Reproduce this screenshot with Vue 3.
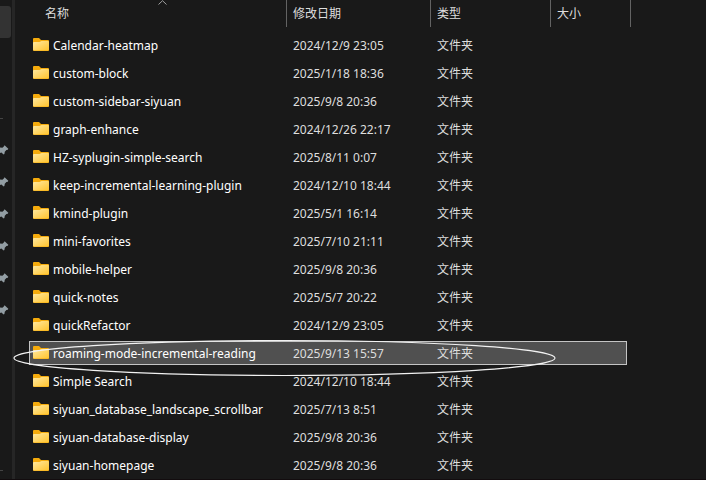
<template>
  <div class="explorer">
    <nav class="sidebar" aria-label="导航">
      <button class="nav-item active" type="button" aria-label="主文件夹"></button>
      <hr class="nav-line" />
      <div class="pins">
        <button v-for="n in 6" :key="n" class="pin" type="button" aria-label="已固定">
          <svg width="9" height="10" viewBox="0 0 9 10">
            <path d="M4.6 0.2 L8.3 3.8 L7.8 4.8 L6.4 5.1 L4.8 6.7 L4.4 9 L3.6 9.6 L1.4 7.4 L0 8 V2.6 L2.4 2.7 L3.8 1.5 Z" fill="#929da3" />
          </svg>
        </button>
      </div>
      <hr class="nav-line last" />
    </nav>
    <main class="content">
      <table class="files">
        <colgroup>
          <col class="col-name" />
          <col class="col-date" />
          <col class="col-type" />
          <col class="col-size" />
        </colgroup>
        <thead>
          <tr>
            <th v-for="col in columns" :key="col.key" scope="col">
              <button class="sort" :class="{ first: col.key === 'name' }" type="button" @click="sortBy(col.key)">
                <svg v-if="sortKey === col.key" class="caret" width="9" height="5" viewBox="0 0 9 5">
                  <path d="M0.5 4.5 L4.5 0.7 L8.5 4.5" fill="none" stroke="#a0a0a0" />
                </svg>
                {{ col.label }}
              </button>
            </th>
          </tr>
        </thead>
        <tbody>
          <tr
            v-for="file in files"
            :key="file.name"
            :class="{ selected: file.name === selected }"
            @click="selected = file.name"
          >
            <td>
              <div class="cell name">
                <svg class="folder" width="16" height="16" viewBox="0 0 16 16">
                  <defs>
                    <linearGradient id="folderFill" x1="0" y1="0" x2="1" y2="1">
                      <stop offset="0" stop-color="#ffe9a2" />
                      <stop offset="1" stop-color="#ffc42e" />
                    </linearGradient>
                  </defs>
                  <path d="M0 1 Q0 0 1 0 H6 L8 2 H15 Q16 2 16 3 V12 Q16 13 15 13 H1 Q0 13 0 12 Z" fill="#f5ab0c" />
                  <path d="M0 5 Q0 4 1 4 H6.5 L8.5 3 H15 Q16 3 16 4 V11.4 Q16 12.4 15 12.4 H1 Q0 12.4 0 11.4 Z" fill="url(#folderFill)" />
                </svg>
                <span>{{ file.name }}</span>
                <svg v-if="file.name === marked" class="mark" width="543" height="38" viewBox="0 0 543 38">
                  <ellipse cx="271.5" cy="19" rx="270.5" ry="17.5" fill="none" stroke="#f2f2f2" stroke-width="1.2" />
                </svg>
              </div>
            </td>
            <td><div class="cell">{{ file.date }}</div></td>
            <td><div class="cell">文件夹</div></td>
            <td><div class="cell end"></div></td>
          </tr>
        </tbody>
      </table>
    </main>
  </div>
</template>

<script setup>
import { ref } from "vue";

const columns = [
  { key: "name", label: "名称" },
  { key: "date", label: "修改日期" },
  { key: "type", label: "类型" },
  { key: "size", label: "大小" },
];

const files = ref([
  { name: "Calendar-heatmap", date: "2024/12/9 23:05" },
  { name: "custom-block", date: "2025/1/18 18:36" },
  { name: "custom-sidebar-siyuan", date: "2025/9/8 20:36" },
  { name: "graph-enhance", date: "2024/12/26 22:17" },
  { name: "HZ-syplugin-simple-search", date: "2025/8/11 0:07" },
  { name: "keep-incremental-learning-plugin", date: "2024/12/10 18:44" },
  { name: "kmind-plugin", date: "2025/5/1 16:14" },
  { name: "mini-favorites", date: "2025/7/10 21:11" },
  { name: "mobile-helper", date: "2025/9/8 20:36" },
  { name: "quick-notes", date: "2025/5/7 20:22" },
  { name: "quickRefactor", date: "2024/12/9 23:05" },
  { name: "roaming-mode-incremental-reading", date: "2025/9/13 15:57" },
  { name: "Simple Search", date: "2024/12/10 18:44" },
  { name: "siyuan_database_landscape_scrollbar", date: "2025/7/13 8:51" },
  { name: "siyuan-database-display", date: "2025/9/8 20:36" },
  { name: "siyuan-homepage", date: "2025/9/8 20:36" },
]);

const marked = "roaming-mode-incremental-reading";
const selected = ref(marked);
const sortKey = ref("name");

const sortBy = (key) => {
  sortKey.value = key;
};
</script>

<style>
body {
  margin: 0;
  background: #191919;
}
</style>

<style scoped>
.explorer {
  display: flex;
  min-height: 100vh;
  box-sizing: border-box;
  overflow: hidden;
  background: #191919;
  border-bottom: 1px solid #120c0e;
  color: #dedede;
  font-family: "Noto Sans", "Noto Sans CJK SC", sans-serif;
  font-size: 12px;
  line-height: 16px;
}

button {
  border: 0;
  padding: 0;
  background: none;
  color: inherit;
  font: inherit;
}

.sidebar {
  flex: none;
  width: 12px;
  border-right: 3px solid #262626;
  padding-top: 6px;
}

.nav-item {
  display: block;
  width: 11px;
  height: 32px;
  border-radius: 0 3px 3px 0;
}

.nav-item.active {
  background: #333333;
}

.nav-line {
  width: 3px;
  height: 1px;
  margin: 80px 0 15px;
  border: 0;
  background: #444444;
}

.nav-line.last {
  margin: 144px 0 0;
}

.pins {
  display: flex;
  flex-direction: column;
}

.pin {
  display: flex;
  align-items: center;
  height: 32px;
}

.content {
  flex: 1;
  min-width: 0;
  padding-left: 14px;
}

.files {
  table-layout: fixed;
  width: 602px;
  border-collapse: separate;
  border-spacing: 0;
}

.col-name {
  width: 258px;
}

.col-date {
  width: 144px;
}

.col-type {
  width: 120px;
}

.col-size {
  width: 80px;
}

th {
  height: 27px;
  padding: 0;
  border-right: 1px solid #636363;
  font-weight: normal;
}

.sort {
  position: relative;
  display: block;
  width: 100%;
  height: 27px;
  padding-top: 1px;
  padding-left: 6px;
  text-align: left;
}

.sort.first {
  width: auto;
  min-width: calc(100% - 8px);
  margin-left: 8px;
  padding-left: 8px;
}

.caret {
  position: absolute;
  top: 0;
  left: calc(50% - 4px);
}

td {
  padding: 2px 0;
}

tbody tr:first-child td {
  padding-top: 6px;
}

.cell {
  display: flex;
  align-items: center;
  box-sizing: border-box;
  height: 24px;
  padding-top: 2px;
  padding-left: 6px;
  border: solid transparent;
  border-width: 1px 0;
  white-space: nowrap;
}

.cell.name {
  position: relative;
  gap: 4px;
  padding-left: 3px;
  border-left-width: 1px;
  color: #ffffff;
}

.cell.end {
  margin-right: 4px;
  border-right-width: 1px;
}

.selected .cell {
  border-color: #c4c4c4;
  background: #505050;
}

.folder {
  flex: none;
}

.mark {
  position: absolute;
  top: -3px;
  left: -17px;
  pointer-events: none;
}
</style>
